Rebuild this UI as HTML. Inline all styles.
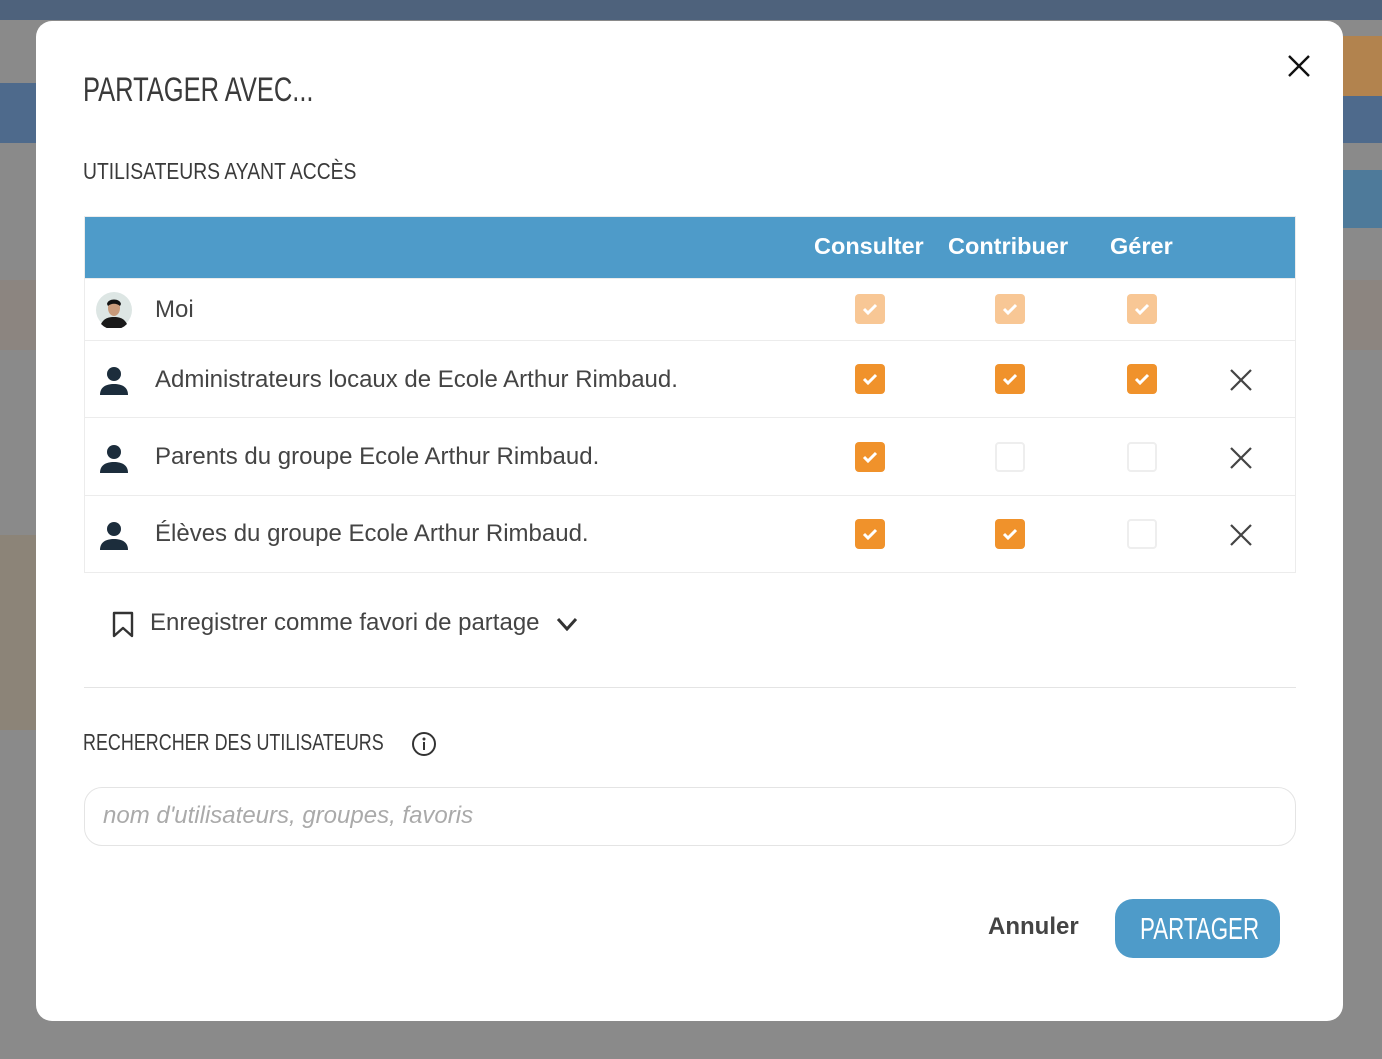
<!DOCTYPE html>
<html><head><meta charset="utf-8"><style>
*{box-sizing:border-box;margin:0;padding:0}
body{width:1382px;height:1059px;overflow:hidden;background:#8a8a8a;font-family:"Liberation Sans",sans-serif;position:relative}
.bg{position:absolute}
.modal{position:absolute;left:36px;top:21px;width:1307px;height:1000px;background:#fff;border-radius:16px}
.hand{font-family:"Liberation Sans",sans-serif;color:#3a3a3a;position:absolute;transform-origin:0 50%;white-space:nowrap}
.tbl{position:absolute;left:48px;top:195px;width:1212px;border:1px solid #ececec}
.hdr{height:61px;background:#4e9bc9;position:relative;color:#fff;font-weight:bold;font-size:23.5px}
.hdr span{position:absolute;top:16px}
.row{position:relative;border-top:1px solid #ececec;font-size:24px;color:#444}
.row .name{position:absolute;left:70px}
.cb{position:absolute;width:30px;height:30px;border-radius:4px;background:#f0922b}
.cb.l{background:#f8c795}
.cb.e{background:#fff;border:2px solid #eee}
.cb svg{position:absolute;left:7px;top:8px}
.x{position:absolute;left:1145px}
.usr{position:absolute;left:14px}
</style></head><body>
<div class="bg" style="left:0;top:0;width:1382px;height:20px;background:#4e627c"></div>
<div class="bg" style="left:0;top:83px;width:1382px;height:60px;background:#4e6a8c"></div>
<div class="bg" style="left:1340px;top:36px;width:42px;height:60px;background:#b2834e"></div>
<div class="bg" style="left:1340px;top:170px;width:42px;height:58px;background:#4e7a9a"></div>
<div class="bg" style="left:0;top:280px;width:1382px;height:70px;background:#8c8580"></div>
<div class="bg" style="left:0;top:535px;width:36px;height:195px;background:#8c8478"></div>

<div class="modal">
<div class="hand" style="left:47px;top:50px;font-size:34px;transform:scaleX(0.75)">PARTAGER AVEC...</div>
<div class="hand" style="left:47px;top:137px;font-size:23px;transform:scaleX(0.84)">UTILISATEURS AYANT ACCÈS</div>
<svg style="position:absolute;left:1252px;top:34px" width="22" height="22" viewBox="0 0 22 22"><path d="M1 1L21 21M21 1L1 21" stroke="#111" stroke-width="2.4"/></svg>

<div class="tbl">
<div class="hdr"><span style="left:729px">Consulter</span><span style="left:863px">Contribuer</span><span style="left:1025px">Gérer</span></div>
<div class="row" style="height:62px">
 <svg class="usr" style="left:11px;top:13px" width="36" height="36" viewBox="0 0 36 36"><circle cx="18" cy="18" r="18" fill="#dde6e4"/><path d="M5 32c3-6 8-7 13-7s10 1 13 7a18 18 0 0 1-26 0z" fill="#1a1a1a"/><ellipse cx="18" cy="16" rx="6" ry="8" fill="#c89a7a"/><path d="M11 12c1-6 13-6 14 0l-1 2c-3-3-9-3-12 0z" fill="#111"/></svg>
 <div class="name" style="top:17px">Moi</div>
 <div class="cb l" style="left:770px;top:15px"><svg width="16" height="13" viewBox="0 0 16 13"><path d="M2 7l4 4 8-8" fill="none" stroke="#fff" stroke-width="3"/></svg></div>
 <div class="cb l" style="left:910px;top:15px"><svg width="16" height="13" viewBox="0 0 16 13"><path d="M2 7l4 4 8-8" fill="none" stroke="#fff" stroke-width="3"/></svg></div>
 <div class="cb l" style="left:1042px;top:15px"><svg width="16" height="13" viewBox="0 0 16 13"><path d="M2 7l4 4 8-8" fill="none" stroke="#fff" stroke-width="3"/></svg></div>
</div>
<div class="row" style="height:77px">
 <svg class="usr" style="top:24px" width="30" height="32" viewBox="0 0 30 32"><circle cx="15" cy="9" r="7" fill="#1c2d3c"/><path d="M1 30c0-8 6-11 14-11s14 3 14 11z" fill="#1c2d3c"/></svg>
 <div class="name" style="top:25px">Administrateurs locaux de Ecole Arthur Rimbaud.</div>
 <div class="cb" style="left:770px;top:23px"><svg width="16" height="13" viewBox="0 0 16 13"><path d="M2 7l4 4 8-8" fill="none" stroke="#fff" stroke-width="3"/></svg></div>
 <div class="cb" style="left:910px;top:23px"><svg width="16" height="13" viewBox="0 0 16 13"><path d="M2 7l4 4 8-8" fill="none" stroke="#fff" stroke-width="3"/></svg></div>
 <div class="cb" style="left:1042px;top:23px"><svg width="16" height="13" viewBox="0 0 16 13"><path d="M2 7l4 4 8-8" fill="none" stroke="#fff" stroke-width="3"/></svg></div>
 <svg class="x" style="top:28px" width="22" height="22" viewBox="0 0 22 22"><path d="M1 1L21 21M21 1L1 21" stroke="#444" stroke-width="2.2"/></svg>
</div>
<div class="row" style="height:78px">
 <svg class="usr" style="top:25px" width="30" height="32" viewBox="0 0 30 32"><circle cx="15" cy="9" r="7" fill="#1c2d3c"/><path d="M1 30c0-8 6-11 14-11s14 3 14 11z" fill="#1c2d3c"/></svg>
 <div class="name" style="top:25px">Parents du groupe Ecole Arthur Rimbaud.</div>
 <div class="cb" style="left:770px;top:24px"><svg width="16" height="13" viewBox="0 0 16 13"><path d="M2 7l4 4 8-8" fill="none" stroke="#fff" stroke-width="3"/></svg></div>
 <div class="cb e" style="left:910px;top:24px"></div>
 <div class="cb e" style="left:1042px;top:24px"></div>
 <svg class="x" style="top:29px" width="22" height="22" viewBox="0 0 22 22"><path d="M1 1L21 21M21 1L1 21" stroke="#444" stroke-width="2.2"/></svg>
</div>
<div class="row" style="height:77px">
 <svg class="usr" style="top:24px" width="30" height="32" viewBox="0 0 30 32"><circle cx="15" cy="9" r="7" fill="#1c2d3c"/><path d="M1 30c0-8 6-11 14-11s14 3 14 11z" fill="#1c2d3c"/></svg>
 <div class="name" style="top:24px">Élèves du groupe Ecole Arthur Rimbaud.</div>
 <div class="cb" style="left:770px;top:23px"><svg width="16" height="13" viewBox="0 0 16 13"><path d="M2 7l4 4 8-8" fill="none" stroke="#fff" stroke-width="3"/></svg></div>
 <div class="cb" style="left:910px;top:23px"><svg width="16" height="13" viewBox="0 0 16 13"><path d="M2 7l4 4 8-8" fill="none" stroke="#fff" stroke-width="3"/></svg></div>
 <div class="cb e" style="left:1042px;top:23px"></div>
 <svg class="x" style="top:28px" width="22" height="22" viewBox="0 0 22 22"><path d="M1 1L21 21M21 1L1 21" stroke="#444" stroke-width="2.2"/></svg>
</div>
</div>

<svg style="position:absolute;left:76px;top:590px" width="22" height="27" viewBox="0 0 22 27"><path d="M2 2h18v23l-9-8-9 8z" fill="none" stroke="#333" stroke-width="2.4" stroke-linejoin="round"/></svg>
<div style="position:absolute;left:114px;top:588px;font-size:24px;color:#444">Enregistrer comme favori de partage</div>
<svg style="position:absolute;left:520px;top:596px" width="22" height="14" viewBox="0 0 22 14"><path d="M2 2l9 10 9-10" fill="none" stroke="#333" stroke-width="3"/></svg>
<div style="position:absolute;left:48px;top:666px;width:1212px;height:1px;background:#e4e4e4"></div>
<div class="hand" style="left:47px;top:708px;font-size:23px;transform:scaleX(0.78)">RECHERCHER DES UTILISATEURS</div>
<svg style="position:absolute;left:375px;top:710px" width="26" height="26" viewBox="0 0 26 26"><circle cx="13" cy="13" r="11" fill="none" stroke="#333" stroke-width="2"/><circle cx="13" cy="8" r="1.5" fill="#333"/><path d="M13 11v8" stroke="#333" stroke-width="2"/></svg>
<div style="position:absolute;left:48px;top:766px;width:1212px;height:59px;border:1px solid #e4e4e4;border-radius:18px"></div>
<div style="position:absolute;left:67px;top:781px;font-size:24px;color:#aaa;font-style:italic">nom d'utilisateurs, groupes, favoris</div>
<div style="position:absolute;left:952px;top:892px;font-size:24px;color:#444;font-weight:bold">Annuler</div>
<div style="position:absolute;left:1079px;top:878px;width:165px;height:59px;background:#4e9bc9;border-radius:18px"></div>
<div class="hand" style="left:1104px;top:890px;font-size:31px;color:#fff;transform:scaleX(0.72)">PARTAGER</div>
</div>
</body></html>
